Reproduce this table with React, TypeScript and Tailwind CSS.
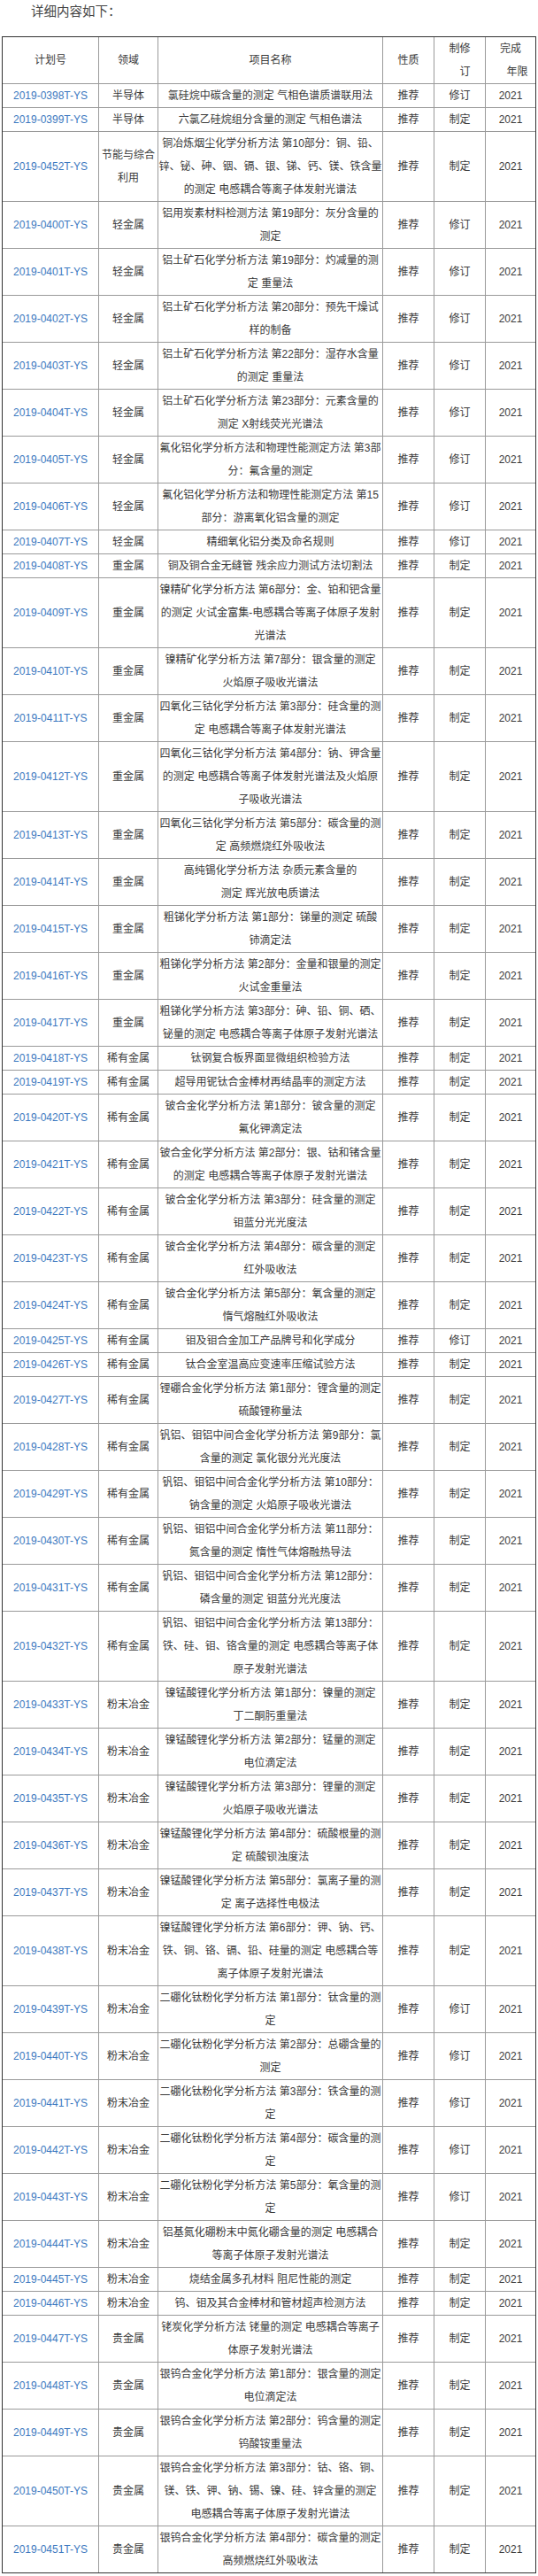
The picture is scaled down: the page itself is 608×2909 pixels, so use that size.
import React from "react";

type Row = [string, string[], string[], string];

const rows: Row[] = [
  ["0398", ["半导体"], ["氯硅烷中碳含量的测定 气相色谱质谱联用法"], "修订"],
  ["0399", ["半导体"], ["六氯乙硅烷组分含量的测定 气相色谱法"], "制定"],
  ["0452", ["节能与综合", "利用"], ["铜冶炼烟尘化学分析方法 第10部分：铜、铅、", "锌、铋、砷、铟、镉、银、锑、钙、镁、铁含量", "的测定 电感耦合等离子体发射光谱法"], "制定"],
  ["0400", ["轻金属"], ["铝用炭素材料检测方法 第19部分：灰分含量的", "测定"], "修订"],
  ["0401", ["轻金属"], ["铝土矿石化学分析方法 第19部分：灼减量的测", "定 重量法"], "修订"],
  ["0402", ["轻金属"], ["铝土矿石化学分析方法 第20部分：预先干燥试", "样的制备"], "修订"],
  ["0403", ["轻金属"], ["铝土矿石化学分析方法 第22部分：湿存水含量", "的测定 重量法"], "修订"],
  ["0404", ["轻金属"], ["铝土矿石化学分析方法 第23部分：元素含量的", "测定 X射线荧光光谱法"], "修订"],
  ["0405", ["轻金属"], ["氟化铝化学分析方法和物理性能测定方法 第3部", "分：氟含量的测定"], "修订"],
  ["0406", ["轻金属"], ["氟化铝化学分析方法和物理性能测定方法 第15", "部分：游离氧化铝含量的测定"], "修订"],
  ["0407", ["轻金属"], ["精细氧化铝分类及命名规则"], "修订"],
  ["0408", ["重金属"], ["铜及铜合金无缝管 残余应力测试方法切割法"], "制定"],
  ["0409", ["重金属"], ["镍精矿化学分析方法 第6部分：金、铂和钯含量", "的测定 火试金富集-电感耦合等离子体原子发射", "光谱法"], "制定"],
  ["0410", ["重金属"], ["镍精矿化学分析方法 第7部分：银含量的测定", "火焰原子吸收光谱法"], "制定"],
  ["0411", ["重金属"], ["四氧化三钴化学分析方法 第3部分：硅含量的测", "定 电感耦合等离子体发射光谱法"], "制定"],
  ["0412", ["重金属"], ["四氧化三钴化学分析方法 第4部分：钠、钾含量", "的测定 电感耦合等离子体发射光谱法及火焰原", "子吸收光谱法"], "制定"],
  ["0413", ["重金属"], ["四氧化三钴化学分析方法 第5部分：碳含量的测", "定 高频燃烧红外吸收法"], "制定"],
  ["0414", ["重金属"], ["高纯锡化学分析方法 杂质元素含量的", "测定 辉光放电质谱法"], "制定"],
  ["0415", ["重金属"], ["粗锑化学分析方法 第1部分：锑量的测定 硫酸", "铈滴定法"], "制定"],
  ["0416", ["重金属"], ["粗锑化学分析方法 第2部分：金量和银量的测定", "火试金重量法"], "制定"],
  ["0417", ["重金属"], ["粗锑化学分析方法 第3部分：砷、铅、铜、硒、", "铋量的测定 电感耦合等离子体原子发射光谱法"], "制定"],
  ["0418", ["稀有金属"], ["钛钢复合板界面显微组织检验方法"], "制定"],
  ["0419", ["稀有金属"], ["超导用铌钛合金棒材再结晶率的测定方法"], "制定"],
  ["0420", ["稀有金属"], ["铍合金化学分析方法 第1部分：铍含量的测定", "氟化钾滴定法"], "制定"],
  ["0421", ["稀有金属"], ["铍合金化学分析方法 第2部分：银、钴和锗含量", "的测定 电感耦合等离子体原子发射光谱法"], "制定"],
  ["0422", ["稀有金属"], ["铍合金化学分析方法 第3部分：硅含量的测定", "钼蓝分光光度法"], "制定"],
  ["0423", ["稀有金属"], ["铍合金化学分析方法 第4部分：碳含量的测定", "红外吸收法"], "制定"],
  ["0424", ["稀有金属"], ["铍合金化学分析方法 第5部分：氧含量的测定", "惰气熔融红外吸收法"], "制定"],
  ["0425", ["稀有金属"], ["钼及钼合金加工产品牌号和化学成分"], "修订"],
  ["0426", ["稀有金属"], ["钛合金室温高应变速率压缩试验方法"], "制定"],
  ["0427", ["稀有金属"], ["锂硼合金化学分析方法 第1部分：锂含量的测定", "硫酸锂称量法"], "制定"],
  ["0428", ["稀有金属"], ["钒铝、钼铝中间合金化学分析方法 第9部分：氯", "含量的测定 氯化银分光光度法"], "制定"],
  ["0429", ["稀有金属"], ["钒铝、钼铝中间合金化学分析方法 第10部分：", "钠含量的测定 火焰原子吸收光谱法"], "制定"],
  ["0430", ["稀有金属"], ["钒铝、钼铝中间合金化学分析方法 第11部分：", "氮含量的测定 惰性气体熔融热导法"], "制定"],
  ["0431", ["稀有金属"], ["钒铝、钼铝中间合金化学分析方法 第12部分：", "磷含量的测定 钼蓝分光光度法"], "制定"],
  ["0432", ["稀有金属"], ["钒铝、钼铝中间合金化学分析方法 第13部分：", "铁、硅、钼、铬含量的测定 电感耦合等离子体", "原子发射光谱法"], "制定"],
  ["0433", ["粉末冶金"], ["镍锰酸锂化学分析方法 第1部分：镍量的测定", "丁二酮肟重量法"], "制定"],
  ["0434", ["粉末冶金"], ["镍锰酸锂化学分析方法 第2部分：锰量的测定", "电位滴定法"], "制定"],
  ["0435", ["粉末冶金"], ["镍锰酸锂化学分析方法 第3部分：锂量的测定", "火焰原子吸收光谱法"], "制定"],
  ["0436", ["粉末冶金"], ["镍锰酸锂化学分析方法 第4部分：硫酸根量的测", "定 硫酸钡浊度法"], "制定"],
  ["0437", ["粉末冶金"], ["镍锰酸锂化学分析方法 第5部分：氯离子量的测", "定 离子选择性电极法"], "制定"],
  ["0438", ["粉末冶金"], ["镍锰酸锂化学分析方法 第6部分：钾、钠、钙、", "铁、铜、铬、镉、铅、硅量的测定 电感耦合等", "离子体原子发射光谱法"], "制定"],
  ["0439", ["粉末冶金"], ["二硼化钛粉化学分析方法 第1部分：钛含量的测", "定"], "修订"],
  ["0440", ["粉末冶金"], ["二硼化钛粉化学分析方法 第2部分：总硼含量的", "测定"], "修订"],
  ["0441", ["粉末冶金"], ["二硼化钛粉化学分析方法 第3部分：铁含量的测", "定"], "修订"],
  ["0442", ["粉末冶金"], ["二硼化钛粉化学分析方法 第4部分：碳含量的测", "定"], "修订"],
  ["0443", ["粉末冶金"], ["二硼化钛粉化学分析方法 第5部分：氧含量的测", "定"], "修订"],
  ["0444", ["粉末冶金"], ["铝基氮化硼粉末中氮化硼含量的测定 电感耦合", "等离子体原子发射光谱法"], "制定"],
  ["0445", ["粉末冶金"], ["烧结金属多孔材料 阻尼性能的测定"], "制定"],
  ["0446", ["粉末冶金"], ["钨、钼及其合金棒材和管材超声检测方法"], "制定"],
  ["0447", ["贵金属"], ["铑炭化学分析方法 铑量的测定 电感耦合等离子", "体原子发射光谱法"], "制定"],
  ["0448", ["贵金属"], ["银钨合金化学分析方法 第1部分：银含量的测定", "电位滴定法"], "制定"],
  ["0449", ["贵金属"], ["银钨合金化学分析方法 第2部分：钨含量的测定", "钨酸铵重量法"], "制定"],
  ["0450", ["贵金属"], ["银钨合金化学分析方法 第3部分：钴、铬、铜、", "镁、铁、钾、钠、锡、镍、硅、锌含量的测定", "电感耦合等离子体原子发射光谱法"], "制定"],
  ["0451", ["贵金属"], ["银钨合金化学分析方法 第4部分：碳含量的测定", "高频燃烧红外吸收法"], "制定"],
];

const Lines = ({ lines }: { lines: string[] }) => (
  <>
    {lines.map((l, i) => (
      <div key={i} className="whitespace-nowrap">
        {l}
      </div>
    ))}
  </>
);

export default function App() {
  const font = { fontFamily: '"Liberation Sans", "Noto Sans CJK SC", Arial, sans-serif' };
  const cell = "border-r border-b border-[#9a9a9a] p-0 text-center align-middle font-normal";
  const last = "border-b border-[#9a9a9a] p-0 text-center align-middle font-normal";
  return (
    <div className="bg-white text-[#3a3a3a] pb-[3px]" style={font}>
      <div className="pl-[35px] text-[14.5px] leading-[26px] text-[#444]">详细内容如下：</div>
      <div className="pl-[2px] pt-[15px]">
        <table className="table-fixed border-separate border-spacing-0 border border-[#333] w-[604px] text-[12px] leading-[26px]">
          <colgroup>
            <col className="w-[109px]" />
            <col className="w-[67px]" />
            <col className="w-[254px]" />
            <col className="w-[58px]" />
            <col className="w-[58px]" />
            <col className="w-[56px]" />
          </colgroup>
          <thead>
            <tr>
              <th className={cell}>计划号</th>
              <th className={cell}>领域</th>
              <th className={cell}>项目名称</th>
              <th className={cell}>性质</th>
              <th className={cell}>
                <div>制修</div>
                <div className="pl-[12px]">订</div>
              </th>
              <th className={last}>
                <div>完成</div>
                <div className="pl-[15px]">年限</div>
              </th>
            </tr>
          </thead>
          <tbody>
            {rows.map((r, i) => {
              const isLast = i === rows.length - 1;
              const c = isLast ? cell.replace("border-b ", "") : cell;
              const l = isLast ? "p-0 text-center align-middle" : last;
              return (
                <tr key={r[0]}>
                  <td className={c + " text-[#3b78c0]"}>{`2019-${r[0]}T-YS`}</td>
                  <td className={c}>
                    <Lines lines={r[1]} />
                  </td>
                  <td className={c}>
                    <Lines lines={r[2]} />
                  </td>
                  <td className={c}>推荐</td>
                  <td className={c}>{r[3]}</td>
                  <td className={l}>2021</td>
                </tr>
              );
            })}
          </tbody>
        </table>
      </div>
    </div>
  );
}
